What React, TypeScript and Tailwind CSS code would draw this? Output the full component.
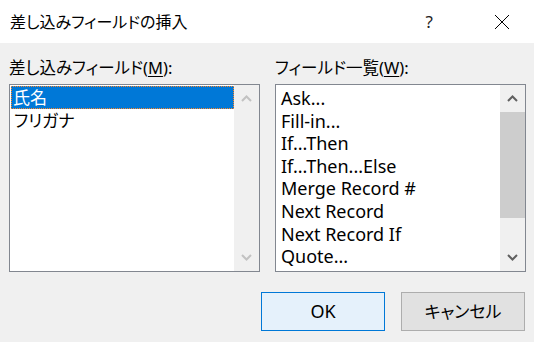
import React from 'react'

const FONT = "font-['Noto_Sans','Noto_Sans_CJK_JP',sans-serif] [font-feature-settings:'palt']"

const FIELDS = ['Ask...', 'Fill-in...', 'If...Then', 'If...Then...Else', 'Merge Record #', 'Next Record', 'Next Record If', 'Quote...']

function Chevron({ up, color }: { up?: boolean; color: string }) {
  return (
    <svg width="11" height="7" viewBox="0 0 11 7" className="block">
      <polyline
        points={up ? '1,6 5.5,1.5 10,6' : '1,1 5.5,5.5 10,1'}
        fill="none"
        stroke={color}
        strokeWidth="2"
      />
    </svg>
  )
}

function ScrollBar({ enabled }: { enabled?: boolean }) {
  const color = enabled ? '#606060' : '#c2c2c2'
  return (
    <div className="w-[25px] bg-[#f0f0f0] flex flex-col shrink-0">
      <div className="h-[27px] flex items-center justify-center">
        <Chevron up color={color} />
      </div>
      <div className="flex-1">
        {enabled && <div className="h-[106px] bg-[#cdcdcd]" />}
      </div>
      <div className="h-[27px] flex items-center justify-center">
        <Chevron color={color} />
      </div>
    </div>
  )
}

function Label({ text, accel }: { text: string; accel: string }) {
  return (
    <div className="h-[21px] leading-[21px] text-[16.5px] text-black mb-[6px] whitespace-nowrap">
      {text}(<span className="underline underline-offset-2">{accel}</span>):
    </div>
  )
}

export default function App() {
  return (
    <div className={`w-[534px] h-[342px] bg-[#f0f0f0] flex flex-col overflow-hidden ${FONT}`}>
      {/* title bar */}
      <div className="h-[43px] bg-white flex items-center pl-[10px] shrink-0">
        <span className="text-[16px] text-black leading-none">差し込みフィールドの挿入</span>
        <span className="ml-auto text-[17px] text-[#222] leading-none mr-[61px]">?</span>
        <svg width="16" height="16" viewBox="0 0 16 16" className="mr-[24px]">
          <path d="M1 1 L15 15 M15 1 L1 15" stroke="#000" strokeWidth="1" />
        </svg>
      </div>

      <div className="flex-1 pl-[9px] pt-[14px]">
        <div className="flex gap-[15px]">
          {/* left column */}
          <div className="w-[251px]">
            <Label text="差し込みフィールド" accel="M" />
            <div className="h-[188px] bg-white border border-[#828790] flex">
              <div className="flex-1 pl-[1px] pt-[1px] text-[17px] text-black">
                <div className="h-[23px] bg-[#0078d7] border border-dotted border-[#ff8728] text-white pl-[1px] leading-[21px]">
                  氏名
                </div>
                <div className="h-[23px] pl-[3px] leading-[23px]">フリガナ</div>
              </div>
              <ScrollBar />
            </div>
          </div>

          {/* right column */}
          <div className="w-[251px]">
            <Label text="フィールド一覧" accel="W" />
            <div className="h-[188px] bg-white border border-[#828790] flex">
              <div className="flex-1 pt-[2px] pl-[5px] text-[18px] text-black overflow-hidden">
                {FIELDS.map(f => (
                  <div key={f} className="h-[22.6px] leading-[22.6px] whitespace-nowrap">
                    {f}
                  </div>
                ))}
              </div>
              <ScrollBar enabled />
            </div>
          </div>
        </div>

        {/* buttons */}
        <div className="flex justify-end gap-[16px] pr-[9px] mt-[20px]">
          <button className="w-[124px] h-[39px] border border-[#0078d7] bg-[#e5f1fb] text-[18px] text-black">
            OK
          </button>
          <button className="w-[124px] h-[39px] border border-[#adadad] bg-[#e1e1e1] text-[17px] text-black">
            キャンセル
          </button>
        </div>
      </div>
    </div>
  )
}
